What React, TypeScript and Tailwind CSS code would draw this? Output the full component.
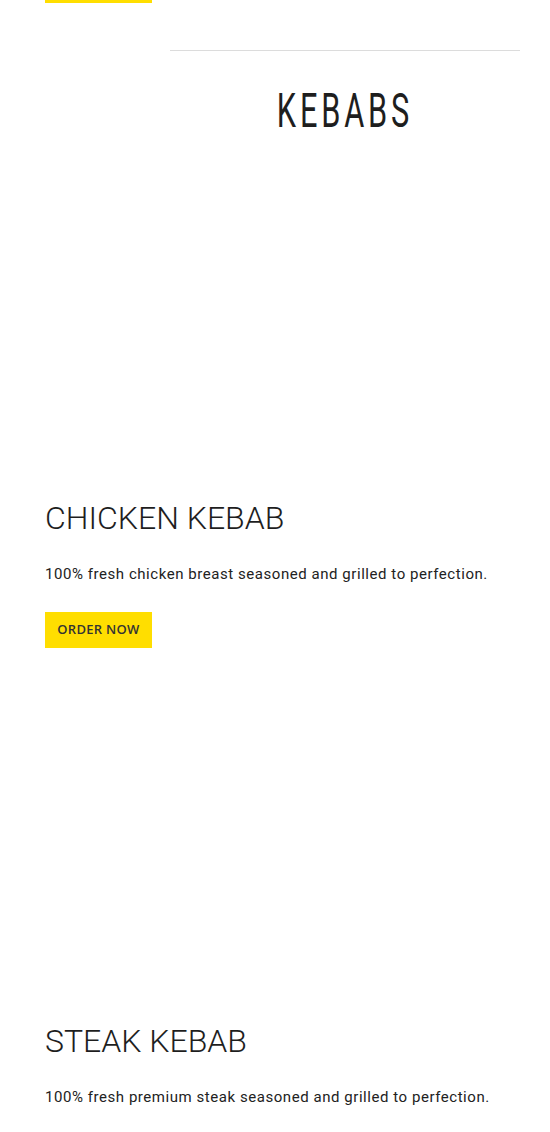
import React from 'react';

const items = [
    { name: 'CHICKEN KEBAB', desc: '100% fresh chicken breast seasoned and grilled to perfection.' },
    { name: 'STEAK KEBAB', desc: '100% fresh premium steak seasoned and grilled to perfection.' },
];

const OrderButton = ({ className = '' }: { className?: string }) => (
    <button
        className={`block w-[107px] h-9 bg-[#ffde00] text-[13px] font-semibold text-[#333] tracking-[0.3px] ${className}`}
        style={{ fontFamily: '"Open Sans", sans-serif' }}
    >
        ORDER NOW
    </button>
);

export default function App() {
    return (
        <div className="w-[550px] h-[1132px] overflow-hidden bg-white text-[#1e1e1e]" style={{ fontFamily: 'Roboto, sans-serif' }}>
            {/* tail of previous item */}
            <div className="pl-[45px] -mt-[33px]">
                <OrderButton />
            </div>

            {/* Category */}
            <div className="ml-[170px] mr-[30px] mt-[47px] border-t border-[#dcdcdc]">
                <h2 className="text-center text-[48px] font-normal leading-none tracking-[6px] mt-[36px] scale-x-[0.64]">KEBABS</h2>
            </div>

            <div className="px-[45px]">
                {items.map((item, i) => (
                    <div key={item.name} className={i === 0 ? 'pt-[367px]' : 'pt-[377px]'}>
                        <h3 className="text-[32px] font-light leading-none">{item.name}</h3>
                        <p className="mt-[33px] text-[15px] leading-none tracking-[0.55px] text-[#222]">{item.desc}</p>
                        <OrderButton className="mt-[30px]" />
                    </div>
                ))}
            </div>
        </div>
    );
}
